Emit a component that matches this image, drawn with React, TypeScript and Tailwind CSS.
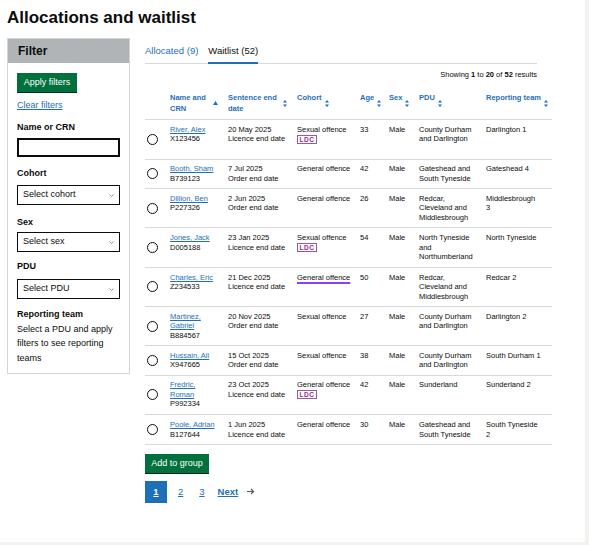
import React from "react";

type Row = {
  name: string;
  crn: string;
  date: string;
  dateType: string;
  cohort: string;
  ldc?: boolean;
  flagged?: boolean;
  age: number;
  pdu: string;
  team: string;
};

const ROWS: Row[] = [
  { name: "River, Alex", crn: "X123456", date: "20 May 2025", dateType: "Licence end date", cohort: "Sexual offence", ldc: true, age: 33, pdu: "County Durham and Darlington", team: "Darlington 1" },
  { name: "Booth, Sham", crn: "B739123", date: "7 Jul 2025", dateType: "Order end date", cohort: "General offence", age: 42, pdu: "Gateshead and South Tyneside", team: "Gateshead 4" },
  { name: "Dillion, Ben", crn: "P227326", date: "2 Jun 2025", dateType: "Order end date", cohort: "General offence", age: 26, pdu: "Redcar, Cleveland and Middlesbrough", team: "Middlesbrough 3" },
  { name: "Jones, Jack", crn: "D005188", date: "23 Jan 2025", dateType: "Licence end date", cohort: "Sexual offence", ldc: true, age: 54, pdu: "North Tyneside and Northumberland", team: "North Tyneside" },
  { name: "Charles, Eric", crn: "Z234533", date: "21 Dec 2025", dateType: "Licence end date", cohort: "General offence", flagged: true, age: 50, pdu: "Redcar, Cleveland and Middlesbrough", team: "Redcar 2" },
  { name: "Martinez, Gabriel", crn: "B884567", date: "20 Nov 2025", dateType: "Order end date", cohort: "Sexual offence", age: 27, pdu: "County Durham and Darlington", team: "Darlington 2" },
  { name: "Hussain, Ali", crn: "X947665", date: "15 Oct 2025", dateType: "Order end date", cohort: "Sexual offence", age: 38, pdu: "County Durham and Darlington", team: "South Durham 1" },
  { name: "Fredric, Roman", crn: "P992334", date: "23 Oct 2025", dateType: "Licence end date", cohort: "General offence", ldc: true, age: 42, pdu: "Sunderland", team: "Sunderland 2" },
  { name: "Poole, Adrian", crn: "B127644", date: "1 Jun 2025", dateType: "Licence end date", cohort: "General offence", age: 30, pdu: "Gateshead and South Tyneside", team: "South Tyneside 2" },
];

function SortIcon({ active }: { active?: boolean }) {
  if (active) {
    return (
      <svg width="5" height="4" viewBox="0 0 5 4" className="shrink-0 mt-[9px]">
        <path d="M2.5 0 L5 4 L0 4 Z" fill="#1d70b8" />
      </svg>
    );
  }
  return (
    <svg width="4" height="7" viewBox="0 0 4 7" className="shrink-0 mt-[8px]">
      <path d="M2 0 L4 2.6 L0 2.6 Z" fill="#1d70b8" />
      <path d="M2 7 L4 4.4 L0 4.4 Z" fill="#1d70b8" />
    </svg>
  );
}

function Header({ label, active, last }: { label: string; active?: boolean; last?: boolean }) {
  return (
    <th className={`pt-[5px] pb-[5px] align-top text-left font-bold leading-[11px] ${last ? "pr-0" : "pr-[10px]"}`}>
      <div className="flex items-start gap-[3px] text-[#1d70b8]">
        <span>{label}</span>
        <SortIcon active={active} />
      </div>
    </th>
  );
}

function Select({ placeholder }: { placeholder: string }) {
  return (
    <div className="flex items-center justify-between h-[20px] w-[103px] border border-[#0b0c0c] px-[5px] text-[9px] text-[#0b0c0c]">
      <span>{placeholder}</span>
      <svg width="5" height="3" viewBox="0 0 5 3">
        <path d="M0.5 0.5 L2.5 2.5 L4.5 0.5" fill="none" stroke="#6f777b" strokeWidth="0.8" />
      </svg>
    </div>
  );
}

export default function App() {
  return (
    <div className="min-h-[545px] w-[589px] bg-[#f3f2f1] font-['Liberation_Sans',Arial,sans-serif] text-[#0b0c0c]">
      <div className="w-[585px] min-h-[542px] bg-white px-[7px] pt-[7px]">
        <h1 className="text-[17px] leading-[22px] font-bold">Allocations and waitlist</h1>

        <div className="mt-[9px] flex items-start gap-[15px]">
          {/* filter sidebar */}
          <aside className="w-[123px] border border-[#d3d4d5]">
            <div className="h-[24px] bg-[#b1b4b6] pl-[10px] flex items-center">
              <h2 className="text-[12px] font-bold">Filter</h2>
            </div>
            <div className="px-[9px] pt-[10px] pb-[8px]">
              <div className="h-[19px] w-[60px] bg-[#00703c] text-white text-[9px] leading-[19px] text-center shadow-[0_1px_0_#002d18]">
                Apply filters
              </div>
              <a className="block mt-[7px] text-[9px] leading-[12px] text-[#1d70b8] underline underline-offset-1">
                Clear filters
              </a>

              <div className="mt-[10px] text-[9px] leading-[12px] font-bold">Name or CRN</div>
              <div className="mt-[5px] h-[19px] w-[103px] border-2 border-[#0b0c0c]" />

              <div className="mt-[10px] text-[9px] leading-[12px] font-bold">Cohort</div>
              <div className="mt-[6px]">
                <Select placeholder="Select cohort" />
              </div>

              <div className="mt-[11px] text-[9px] leading-[12px] font-bold">Sex</div>
              <div className="mt-[4px]">
                <Select placeholder="Select sex" />
              </div>

              <div className="mt-[8px] text-[9px] leading-[12px] font-bold">PDU</div>
              <div className="mt-[7px]">
                <Select placeholder="Select PDU" />
              </div>

              <div className="mt-[9px] text-[9px] leading-[12px] font-bold">Reporting team</div>
              <p className="mt-[2px] text-[9px] leading-[14.3px]">
                Select a PDU and apply filters to see reporting teams
              </p>
            </div>
          </aside>

          {/* main column */}
          <main className="w-[392px] pt-[7px]">
            <div className="flex gap-[10px] border-b border-[#d8d9da] text-[9.5px] leading-[12px]">
              <a className="pb-[6px] text-[#1d70b8]">Allocated (9)</a>
              <a className="pb-[5px] border-b-2 border-[#1d70b8] -mb-px">Waitlist (52)</a>
            </div>

            <p className="mt-[6px] text-right text-[7.5px] leading-[10px]">
              Showing <b>1</b> to <b>20</b> of <b>52</b> results
            </p>

            <table className="mt-[7px] w-[407px] table-fixed border-collapse text-[7.5px] leading-[9.5px]">
              <colgroup>
                <col className="w-[25px]" />
                <col className="w-[58px]" />
                <col className="w-[69px]" />
                <col className="w-[63px]" />
                <col className="w-[29px]" />
                <col className="w-[30px]" />
                <col className="w-[67px]" />
                <col className="w-[66px]" />
              </colgroup>
              <thead>
                <tr className="border-b border-[#d8d9da]">
                  <th />
                  <Header label="Name and CRN" active />
                  <Header label="Sentence end date" />
                  <Header label="Cohort" />
                  <Header label="Age" />
                  <Header label="Sex" />
                  <Header label="PDU" />
                  <Header label="Reporting team" last />
                </tr>
              </thead>
              <tbody>
                {ROWS.map((r) => (
                  <tr key={r.crn} className="border-b border-[#d8d9da] align-top">
                    <td className="align-middle pl-[2px]">
                      <div className="h-[11px] w-[11px] rounded-full border-[1.5px] border-[#0b0c0c]" />
                    </td>
                    <td className="py-[4.8px] pr-[10px]">
                      <a className="text-[#1d70b8] underline underline-offset-1">{r.name}</a>
                      <div>{r.crn}</div>
                    </td>
                    <td className="py-[4.8px] pr-[10px]">
                      <div>{r.date}</div>
                      <div>{r.dateType}</div>
                    </td>
                    <td className="py-[4.8px] pr-[6px]">
                      <div
                        className={
                          r.flagged
                            ? "inline underline decoration-[#8a3ffc] decoration-[1.5px] underline-offset-[2px]"
                            : ""
                        }
                      >
                        {r.cohort}
                      </div>
                      {r.ldc && (
                        <div className="mt-[0.5px] mb-[10px] w-[20px] h-[9px] flex items-center justify-center border border-[#a0579a] text-[6.5px] font-bold tracking-[0.5px] text-[#912b88]">
                          LDC
                        </div>
                      )}
                    </td>
                    <td className="py-[4.8px] pr-[10px]">{r.age}</td>
                    <td className="py-[4.8px] pr-[10px]">Male</td>
                    <td className="py-[4.8px] pr-[10px]">{r.pdu}</td>
                    <td className="py-[4.8px] pr-[11px]">{r.team}</td>
                  </tr>
                ))}
              </tbody>
            </table>

            <div className="mt-[9px] h-[19px] w-[64px] bg-[#00703c] text-white text-[9px] leading-[19px] text-center shadow-[0_1px_0_#002d18]">
              Add to group
            </div>

            <nav className="mt-[8px] flex items-center text-[9.5px]">
              <span className="flex h-[22px] w-[22px] items-center justify-center bg-[#1d70b8] font-bold text-white underline underline-offset-1">
                1
              </span>
              <a className="ml-[11px] text-[#1d70b8] underline underline-offset-1">2</a>
              <a className="ml-[16px] text-[#1d70b8] underline underline-offset-1">3</a>
              <a className="ml-[13px] font-bold text-[#1d70b8] underline underline-offset-1">Next</a>
              <svg width="8" height="7" viewBox="0 0 8 7" className="ml-[9px]">
                <path d="M0 3.5 H6.5 M4 1 L6.5 3.5 L4 6" fill="none" stroke="#505a5f" strokeWidth="1.2" />
              </svg>
            </nav>
          </main>
        </div>
      </div>
    </div>
  );
}
